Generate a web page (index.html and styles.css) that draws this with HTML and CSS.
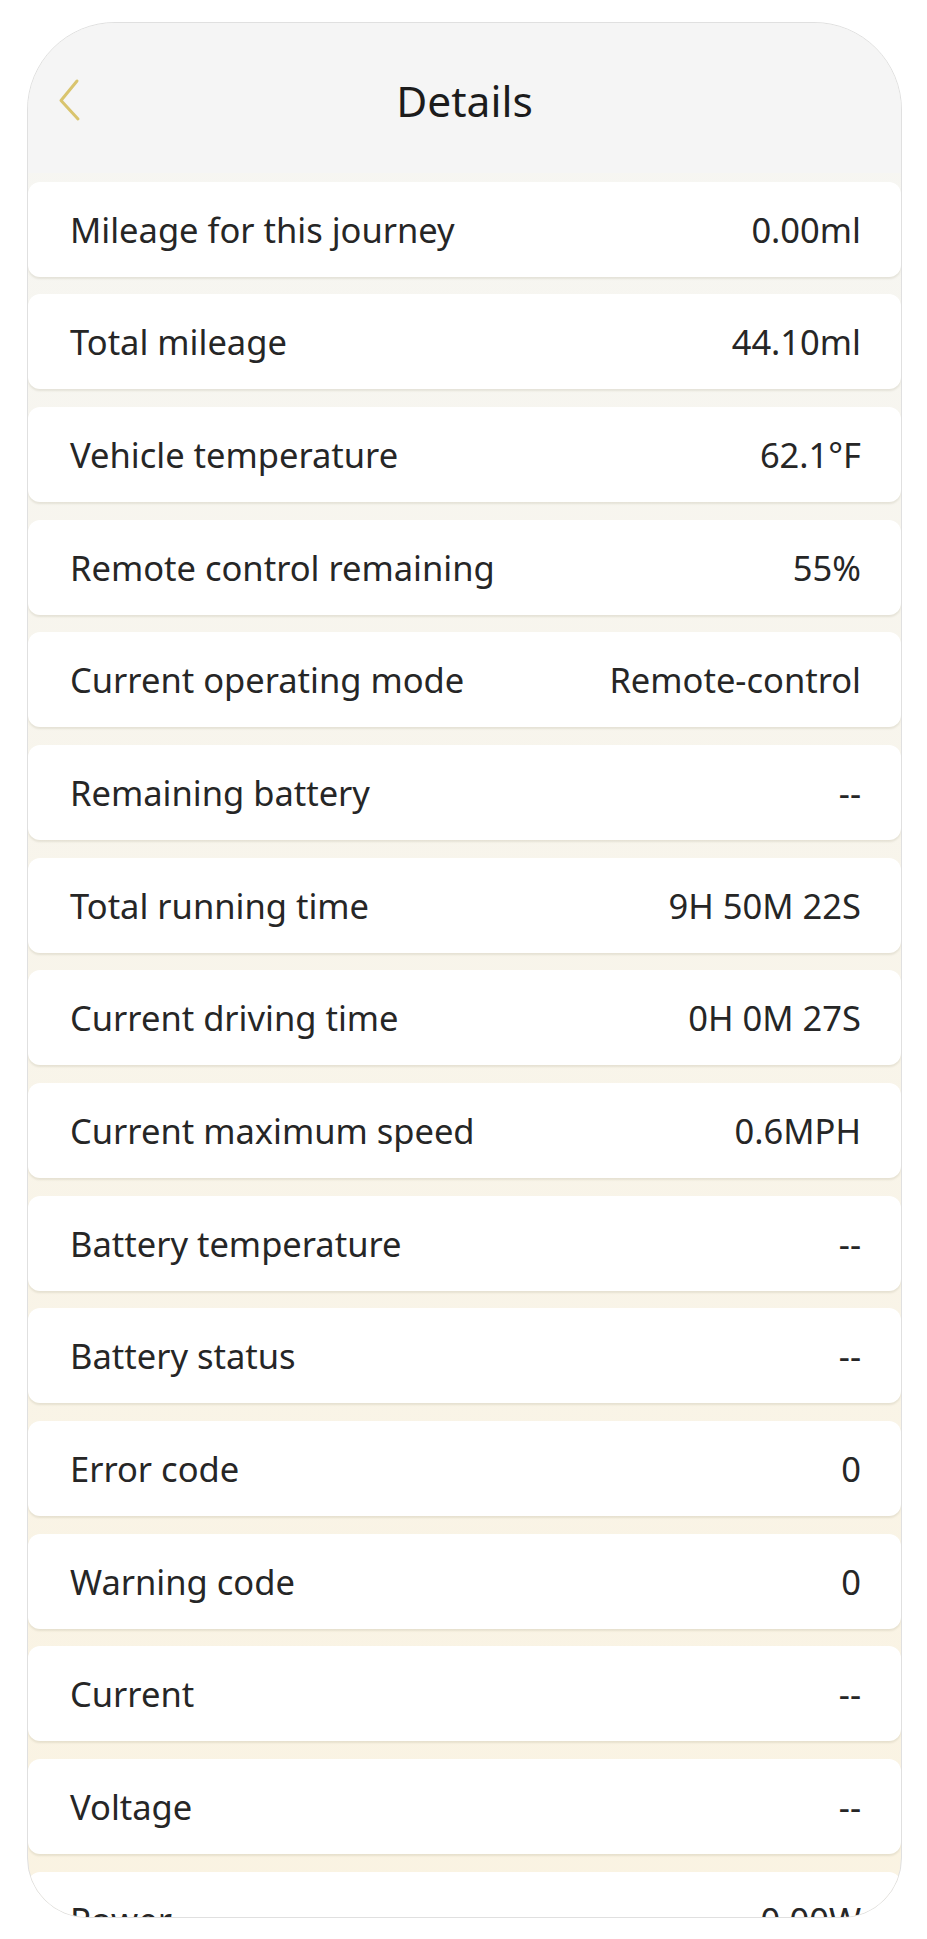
FILE: index.html
```html
<!DOCTYPE html>
<html lang="en">
<head>
  <meta charset="UTF-8">
  <meta name="viewport" content="width=device-width, initial-scale=1.0">
  <title>Details</title>
  <link rel="stylesheet" href="styles.css">
</head>
<body>
  <div class="phone">
    <div class="header">
      <div class="back">
        <svg width="24" height="44" viewBox="0 0 24 44">
          <polyline points="19,3 3,22.5 20,41" fill="none" stroke="#d9c46e" stroke-width="3" stroke-linecap="round" stroke-linejoin="round"/>
        </svg>
      </div>
      <h1 class="title">Details</h1>
      <div></div>
    </div>

    <div class="list">
      <div class="row"><span>Mileage for this journey</span><span>0.00ml</span></div>
      <div class="row"><span>Total mileage</span><span>44.10ml</span></div>
      <div class="row"><span>Vehicle temperature</span><span>62.1°F</span></div>
      <div class="row"><span>Remote control remaining</span><span>55%</span></div>
      <div class="row"><span>Current operating mode</span><span>Remote-control</span></div>
      <div class="row"><span>Remaining battery</span><span>--</span></div>
      <div class="row"><span>Total running time</span><span>9H 50M 22S</span></div>
      <div class="row"><span>Current driving time</span><span>0H 0M 27S</span></div>
      <div class="row"><span>Current maximum speed</span><span>0.6MPH</span></div>
      <div class="row"><span>Battery temperature</span><span>--</span></div>
      <div class="row"><span>Battery status</span><span>--</span></div>
      <div class="row"><span>Error code</span><span>0</span></div>
      <div class="row"><span>Warning code</span><span>0</span></div>
      <div class="row"><span>Current</span><span>--</span></div>
      <div class="row"><span>Voltage</span><span>--</span></div>
      <div class="row"><span>Power</span><span>0.00W</span></div>
    </div>
  </div>
</body>
</html>
```

FILE: styles.css
```css
body {
  margin: 0;
  background: #fff;
  font-family: "Noto Sans", Lato, sans-serif;
}
.phone {
  box-sizing: border-box;
  width: 875px;
  height: 1896px;
  margin: 22px 0 0 27px;
  border: 1.5px solid #e0e0e0;
  border-radius: 88px 88px 60px 60px;
  overflow: hidden;
  background: linear-gradient(#f6f6f3, #faf3e2);
}
.header {
  height: 150px;
  background: #f5f5f5;
  display: grid;
  grid-template-columns: 1fr auto 1fr;
  align-items: center;
  padding-top: 4px;
  box-sizing: border-box;
}
.back {
  padding-left: 30px;
  display: flex;
}
.title {
  margin: 0;
  font-size: 42.5px;
  font-weight: 400;
  color: #1c1c1c;
}
.list {
  display: flex;
  flex-direction: column;
  gap: 17.7px;
  padding-top: 8.5px;
}
.row {
  flex: none;
  height: 95px;
  background: #fff;
  border-radius: 12px;
  box-shadow: 0 2px 2px rgba(120, 110, 80, 0.14);
  display: flex;
  justify-content: space-between;
  align-items: center;
  padding: 0 40px 0 42px;
  font-size: 34.5px;
  color: #262626;
}
```
